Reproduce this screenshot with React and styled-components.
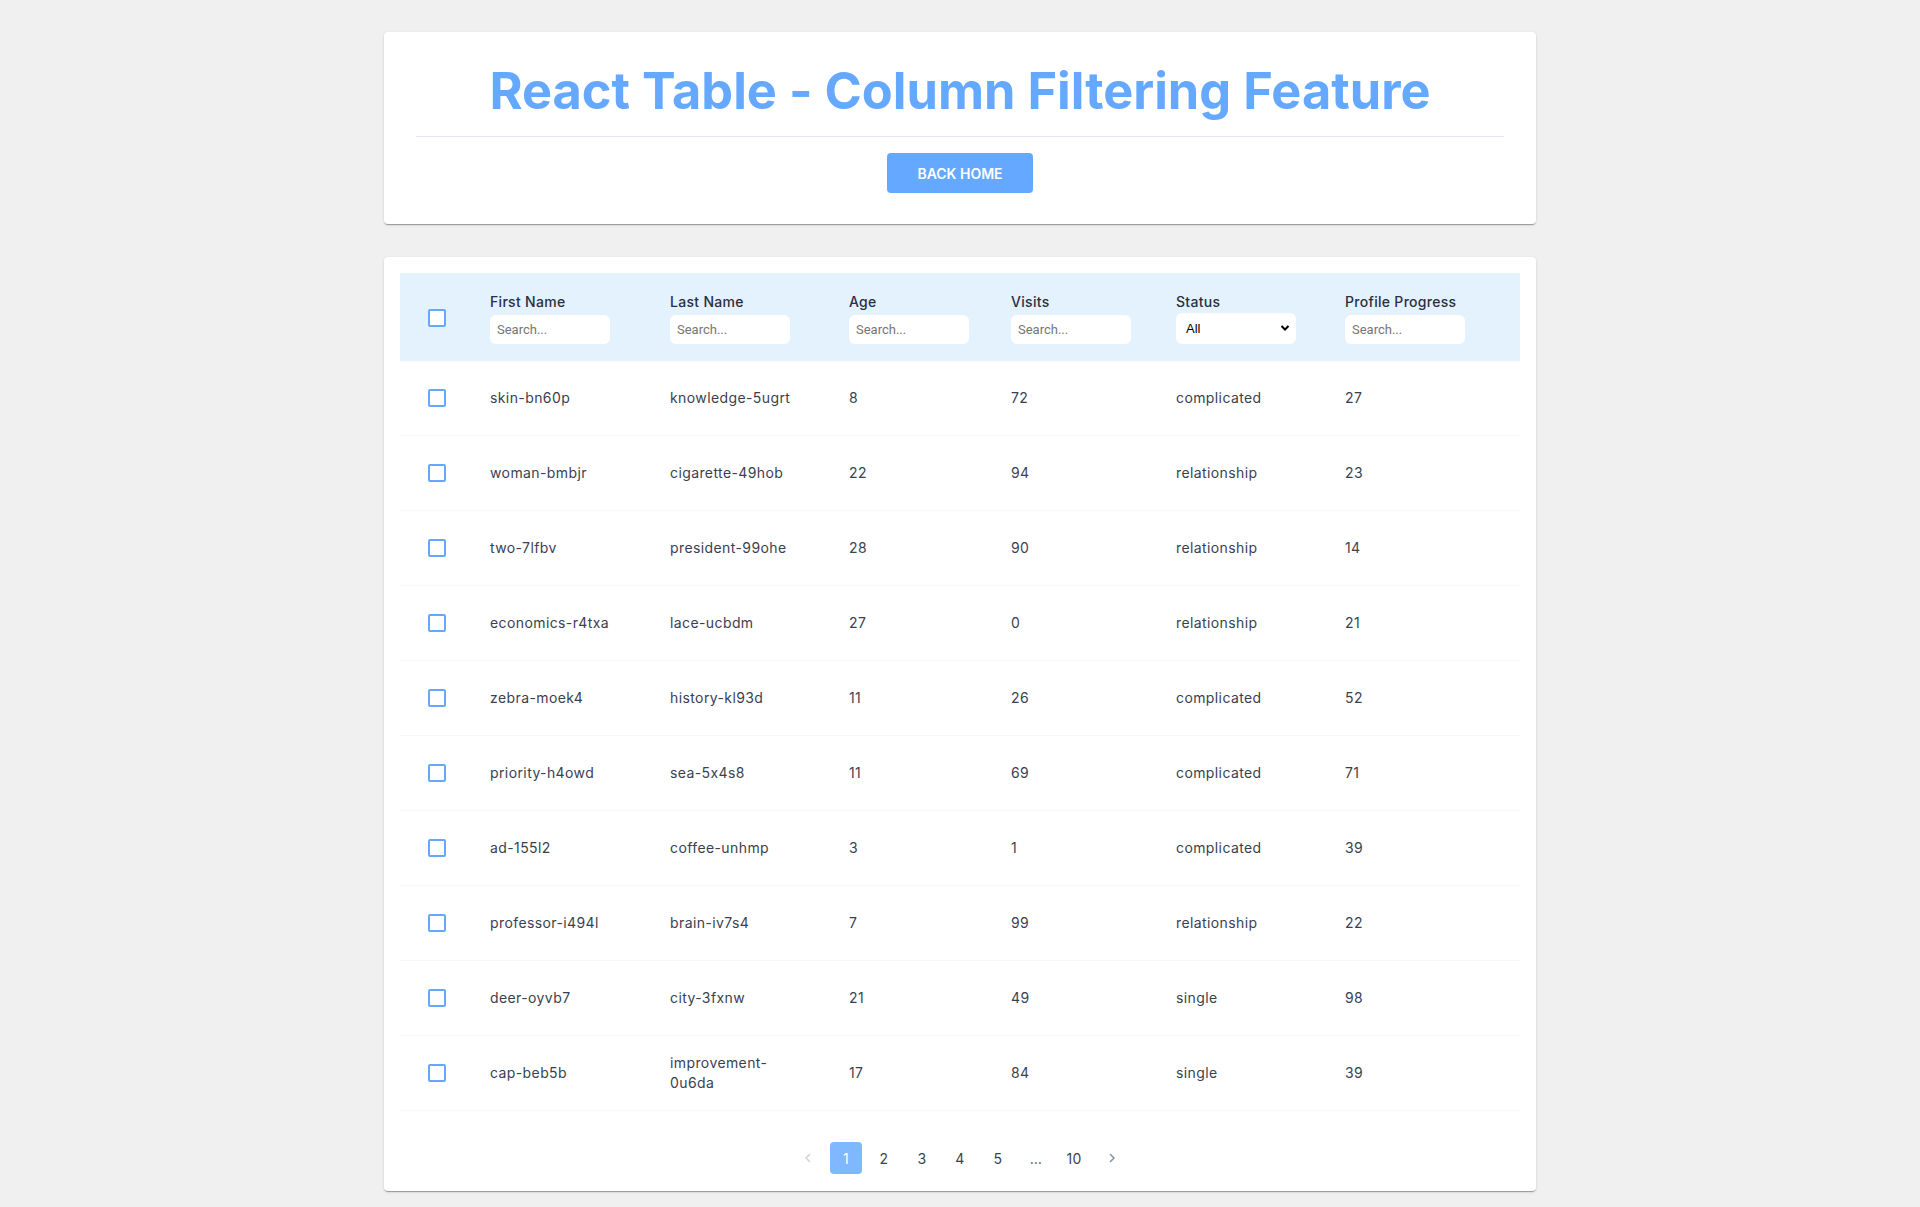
import React from "react";
import styled, { createGlobalStyle } from "styled-components";

const GlobalStyle = createGlobalStyle`
  html, body { margin: 0; padding: 0; }
  body {
    background: #f0f0f0;
    font-family: Inter, "Open Sans", sans-serif;
    font-feature-settings: "calt" 0;
    color: #3a3f51;
  }
  * { box-sizing: border-box; }
`;

const Page = styled.div`
  width: 1152px;
  margin: 0 auto;
  padding: 32px 0 16px;
  display: flex;
  flex-direction: column;
  gap: 33px;
`;

const Card = styled.section`
  background: #fff;
  border-radius: 4px;
  box-shadow: 0px 2px 1px -1px rgba(0, 0, 0, 0.2), 0px 1px 1px 0px rgba(0, 0, 0, 0.14),
    0px 1px 3px 0px rgba(0, 0, 0, 0.12);
  padding: ${(p) => p.$pad};
  display: flex;
  flex-direction: column;
  align-items: ${(p) => (p.$center ? "center" : "stretch")};
`;

const Title = styled.h1`
  margin: 0;
  font-family: Inter, sans-serif;
  font-feature-settings: "calt" 0;
  font-weight: 700;
  font-size: 50.5px;
  line-height: 72px;
  color: #64a9ff;
  text-align: center;
`;

const Divider = styled.hr`
  align-self: stretch;
  border: none;
  height: 1px;
  background: #e3e8f0;
  margin: 9px 0 16px;
`;

const BackButton = styled.button`
  width: 146px;
  height: 40px;
  border: none;
  border-radius: 4px;
  background: #64a9ff;
  color: #fff;
  font-family: Inter, sans-serif;
  font-weight: 600;
  font-size: 14px;
  text-transform: uppercase;
  cursor: pointer;
`;

const COLS = "74px 180px 179px 162px 165px 169px 1fr";

const HeadRow = styled.div`
  display: grid;
  grid-template-columns: ${COLS};
  align-items: center;
  background: #e3f2fd;
  height: 88px;
  padding-top: 1px;
`;

const BodyRow = styled.div`
  display: grid;
  grid-template-columns: ${COLS};
  align-items: center;
  height: 75px;
  border-bottom: 1px solid #f8f8f8;
`;

const CheckCell = styled.div`
  display: flex;
  justify-content: center;
  align-items: center;
`;

const Check = styled.span`
  display: block;
  width: 18px;
  height: 18px;
  border: 2px solid #64a9ff;
  border-radius: 2px;
  background: #fff;
`;

const HeadCell = styled.div`
  padding: 0 16px;
  display: flex;
  flex-direction: column;
  gap: 3px;
`;

const HeadLabel = styled.span`
  font-size: 14px;
  font-weight: 500;
  letter-spacing: 0.3px;
  line-height: 20px;
  color: #2b2f42;
  white-space: nowrap;
`;

const SearchInput = styled.input`
  width: 120px;
  height: 29px;
  border: none;
  border-radius: 6px;
  background: #fff;
  padding: 0 7px;
  font-family: Roboto, "Liberation Sans", sans-serif;
  font-size: 13px;
  color: #333;
  outline: none;
  &::placeholder { color: #767676; }
`;

const SelectWrap = styled.div`
  position: relative;
  width: 120px;
  height: 31px;
  margin-top: -2px;
`;

const Select = styled.select`
  appearance: none;
  width: 100%;
  height: 100%;
  border: none;
  border-radius: 6px;
  background: #fff;
  padding: 0 10px;
  font-family: "Liberation Sans", Arial, sans-serif;
  font-size: 13px;
  color: #000;
  outline: none;
`;

const SelectArrow = styled.svg`
  position: absolute;
  right: 6px;
  top: 11px;
  pointer-events: none;
`;

const Cell = styled.div`
  padding: 0 16px;
  font-size: 14px;
  letter-spacing: 0.4px;
  line-height: 20px;
  color: #3a3f51;
  white-space: pre-line;
`;

const Pager = styled.nav`
  display: flex;
  justify-content: center;
  gap: 6px;
  margin-top: 31px;
  margin-bottom: 1px;
`;

const PageItem = styled.button`
  width: 32px;
  height: 32px;
  border: none;
  border-radius: 4px;
  padding: 0;
  display: flex;
  align-items: center;
  justify-content: center;
  background: ${(p) => (p.$active ? "#80b8ff" : "transparent")};
  color: ${(p) => (p.$active ? "#fff" : "#3a3f51")};
  font-family: Inter, sans-serif;
  font-size: 14px;
  letter-spacing: 0.3px;
  cursor: pointer;
`;

const rows = [
  ["skin-bn60p", "knowledge-5ugrt", 8, 72, "complicated", 27],
  ["woman-bmbjr", "cigarette-49hob", 22, 94, "relationship", 23],
  ["two-7lfbv", "president-99ohe", 28, 90, "relationship", 14],
  ["economics-r4txa", "lace-ucbdm", 27, 0, "relationship", 21],
  ["zebra-moek4", "history-kl93d", 11, 26, "complicated", 52],
  ["priority-h4owd", "sea-5x4s8", 11, 69, "complicated", 71],
  ["ad-155l2", "coffee-unhmp", 3, 1, "complicated", 39],
  ["professor-i494l", "brain-iv7s4", 7, 99, "relationship", 22],
  ["deer-oyvb7", "city-3fxnw", 21, 49, "single", 98],
  ["cap-beb5b", "improvement-\n0u6da", 17, 84, "single", 39],
];

const Chevron = ({ dir, color }) => (
  <svg width="10" height="12" viewBox="0 0 10 12" fill="none">
    <path
      d={dir === "left" ? "M6.5 2.5 L3 6 L6.5 9.5" : "M3.5 2.5 L7 6 L3.5 9.5"}
      stroke={color}
      strokeWidth="1.6"
      strokeLinecap="round"
      strokeLinejoin="round"
    />
  </svg>
);

export default function App() {
  const heads = ["First Name", "Last Name", "Age", "Visits"];
  return (
    <>
      <GlobalStyle />
      <Page>
        <Card $pad="23px 32px 31px" $center>
          <Title>React Table - Column Filtering Feature</Title>
          <Divider />
          <BackButton>Back Home</BackButton>
        </Card>

        <Card $pad="16px 16px 16px">
          <HeadRow>
            <CheckCell>
              <Check />
            </CheckCell>
            {heads.map((h) => (
              <HeadCell key={h}>
                <HeadLabel>{h}</HeadLabel>
                <SearchInput placeholder="Search..." />
              </HeadCell>
            ))}
            <HeadCell>
              <HeadLabel>Status</HeadLabel>
              <SelectWrap>
                <Select defaultValue="all">
                  <option value="all">All</option>
                  <option value="single">single</option>
                  <option value="relationship">relationship</option>
                  <option value="complicated">complicated</option>
                </Select>
                <SelectArrow width="10" height="8" viewBox="0 0 10 8">
                  <path d="M1.5 2 L5 5.5 L8.5 2" stroke="#000" strokeWidth="2" fill="none" />
                </SelectArrow>
              </SelectWrap>
            </HeadCell>
            <HeadCell>
              <HeadLabel>Profile Progress</HeadLabel>
              <SearchInput placeholder="Search..." />
            </HeadCell>
          </HeadRow>

          {rows.map((r) => (
            <BodyRow key={r[0]}>
              <CheckCell>
                <Check />
              </CheckCell>
              {r.map((v, i) => (
                <Cell key={i}>{v}</Cell>
              ))}
            </BodyRow>
          ))}

          <Pager>
            <PageItem>
              <Chevron dir="left" color="#cfd5de" />
            </PageItem>
            <PageItem $active>1</PageItem>
            <PageItem>2</PageItem>
            <PageItem>3</PageItem>
            <PageItem>4</PageItem>
            <PageItem>5</PageItem>
            <PageItem>…</PageItem>
            <PageItem>10</PageItem>
            <PageItem>
              <Chevron dir="right" color="#8a94a6" />
            </PageItem>
          </Pager>
        </Card>
      </Page>
    </>
  );
}
